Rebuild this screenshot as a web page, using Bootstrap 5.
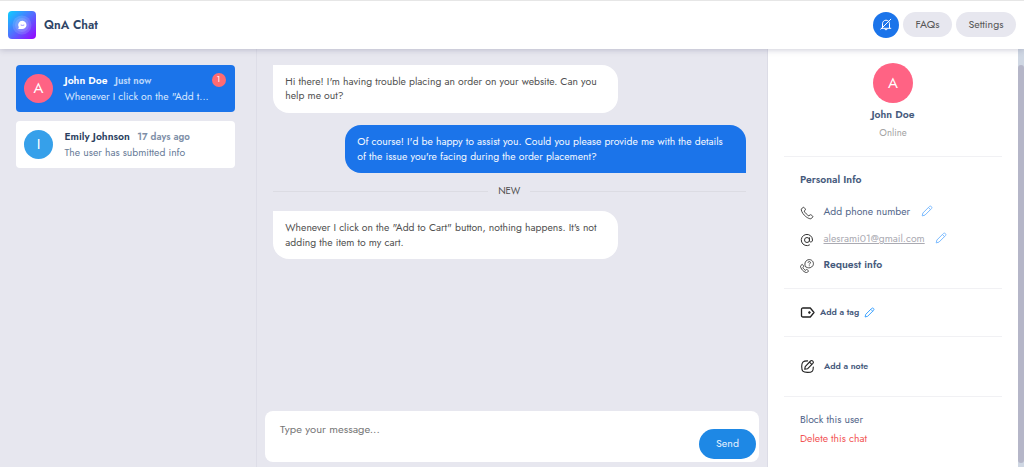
<!DOCTYPE html>
<html lang="en">
<head>
<meta charset="utf-8">
<meta name="viewport" content="width=device-width, initial-scale=1">
<title>QnA Chat</title>
<link href="https://cdn.jsdelivr.net/npm/bootstrap@5.3.0/dist/css/bootstrap.min.css" rel="stylesheet">
<style>
  body { font-family: Jost, Lato, sans-serif; font-size: 10.4px; line-height: 14.4px; background: #e7e7ef; color: #505050; }
  svg { display: block; flex: none; }
  .topbar { height: 48.5px; border-top: 1px solid #e6e6e6; box-shadow: 0 1px 6px rgba(60,60,100,.25); z-index: 2; }
  .brand { font-size: 12px; color: #2f4566; font-weight: 600; margin-left: 8px; }
  .pill { height: 25px; border-radius: 13px; background: #e7e7ef; color: #555; font-size: 10.6px; padding: 2px 0 0; }
  .bell { width: 26px; height: 26px; background: #1b74ea; }
  .inbox { width: 257px; border-right: 1px solid #dedee8; padding: 16px 21.5px 0 16px; }
  .thread { height: 47.5px; border-radius: 4px; padding: 0 8px; margin-bottom: 8.5px; background: #fff; line-height: 15.2px; color: #687b98; }
  .thread.current { background: #1b74ea; color: #d9e8ff; }
  .preview { padding: .5px 0 0 11.5px; }
  .face { width: 29px; height: 29px; font-size: 15px; color: #fff; background: #36a0ea; flex: none; padding-top: 1px; }
  .face.rose { background: #ff6384; }
  .face.large { width: 40px; height: 40px; padding-top: 0; }
  .who { color: #2b3f60; font-weight: 600; }
  .current .who { color: #fff; }
  .ago { font-weight: 600; font-size: 9.7px; margin-left: 7.5px; opacity: .85; }
  .unread { width: 14px; height: 14px; background: #ff6b72; font-size: 8.5px; color: #fff; top: 8.5px; right: 9px; }
  .talk { width: 511px; border-right: 1px solid #dcdce6; }
  .log { padding: 16px 21px 0 15.5px; }
  .msg { height: 48px; padding: 10.1px 12.8px 9px; border-radius: 0 16px 16px 16px; background: #fff; white-space: nowrap; width: 345.5px; }
  .msg.mine { background: #1b74ea; color: #f4f8ff; border-radius: 16px 16px 0 16px; width: 401.5px; margin-top: 12.5px; }
  .divide { height: 38px; font-size: 9.6px; padding-bottom: 1px; }
  .divide span { padding: 0 10px; }
  .rule { height: 1px; background: #dcdce3; }
  .composer { height: 51px; border-radius: 8px; margin: 0 8px 5px 7.5px; padding: 0 3px 3px 15.5px; color: #777; font-size: 11.2px; }
  .hint { padding-top: 11px; }
  .send { width: 57px; height: 30px; border-radius: 15px; background: #1e88e5; color: #e6f2ff; font-size: 10.6px; }
  .profile { width: 250px; padding: .5px 16px 0; color: #53668a; }
  .profile .sep { height: 1px; background: #f1f1f4; }
  .summary { height: 107px; padding-top: 14px; }
  .summary .strong { margin-top: 5px; }
  .state { margin-top: 3.5px; color: #a3a3a3; font-size: 9.6px; }
  .strong { font-weight: 600; color: #465a7c; }
  .facts { height: 131px; padding-top: 14.6px; }
  .line { height: 18px; }
  .label { margin-left: 9.5px; margin-right: 10.5px; }
  .edit { width: 12px; height: 12px; margin-bottom: 4px; color: #7cbcff; }
  .mini { font-size: 8.8px; }
  .mini .edit { width: 11px; height: 11px; margin-bottom: 0; color: #2f9bff; }
  .track { width: 6px; background: #cfd7e3; padding-top: 16px; }
  .thumb { height: 398px; border-radius: 3px; background: #b5b6c8; }
</style>
</head>
<body class="vh-100 overflow-hidden d-flex flex-column">
<svg class="d-none">
  <symbol id="pencil" viewBox="0 0 12 12"><path d="M1.2 10.9l.7-2.9L8.3 1.6c.7-.7 1.5-.6 2.1 0s.7 1.4 0 2.1L4 10.1zM7.4 2.5l2.1 2.1" fill="none" stroke="currentColor" stroke-width="1" stroke-linejoin="round"/></symbol>
</svg>
<header class="topbar bg-white d-flex align-items-center ps-2 pe-2 position-relative flex-shrink-0">
  <svg width="28" height="28" viewBox="0 0 28 28">
    <defs><linearGradient id="g" x1="0" y1="0" x2="1" y2="1"><stop offset="0" stop-color="#0cd0ff"/><stop offset=".5" stop-color="#526cff"/><stop offset="1" stop-color="#9a00ff"/></linearGradient></defs>
    <rect width="28" height="28" rx="4" fill="url(#g)"/>
    <circle cx="14" cy="14" r="9.5" fill="#fff" opacity=".13"/><circle cx="14" cy="14" r="7" fill="#fff" opacity=".13"/>
    <path d="M14.5 9.8a4.3 4.1 0 1 1-.6 8.2H10.2l.6-1.7a4.2 4.2 0 0 1 3.7-6.5z" fill="#fff"/><path d="M12.7 14q1.8.8 3.6 0" stroke="#8578ff" stroke-width=".8" fill="none"/>
  </svg>
  <span class="brand">QnA Chat</span>
  <div class="ms-auto d-flex align-items-center">
    <button class="bell btn p-0 border-0 rounded-circle d-flex align-items-center justify-content-center me-1">
      <svg width="14" height="14" viewBox="0 0 14 14" fill="none" stroke="#fff" stroke-width="1" stroke-linecap="round" stroke-linejoin="round"><path d="M2.2 10.3h9.6M3.5 10V5.8C3.5 1 10.5 1 10.5 5.8V10M5.7 11.2q1.3 1.9 2.6 0M1.8 11.2L11.8 1.2"/></svg>
    </button>
    <button class="pill btn border-0 lh-1 me-1" style="width:49px">FAQs</button>
    <button class="pill btn border-0 lh-1" style="width:60px">Settings</button>
  </div>
</header>
<main class="d-flex flex-grow-1 overflow-hidden">
  <aside class="inbox flex-shrink-0">
    <div class="thread current d-flex align-items-center position-relative">
      <div class="face rose rounded-circle d-flex align-items-center justify-content-center">A</div>
      <div class="preview text-nowrap"><div><span class="who">John Doe</span><span class="ago">Just now</span></div>Whenever I click on the "Add t...</div>
      <span class="unread position-absolute rounded-circle d-flex align-items-center justify-content-center">1</span>
    </div>
    <div class="thread d-flex align-items-center">
      <div class="face rounded-circle d-flex align-items-center justify-content-center">I</div>
      <div class="preview text-nowrap"><div><span class="who">Emily Johnson</span><span class="ago">17 days ago</span></div>The user has submitted info</div>
    </div>
  </aside>
  <section class="talk d-flex flex-column flex-shrink-0">
    <div class="log flex-grow-1 d-flex flex-column">
      <div class="msg">Hi there! I'm having trouble placing an order on your website. Can you<br>help me out?</div>
      <div class="msg mine ms-auto">Of course! I'd be happy to assist you. Could you please provide me with the details<br>of the issue you're facing during the order placement?</div>
      <div class="divide d-flex align-items-center"><div class="rule flex-grow-1"></div><span>NEW</span><div class="rule flex-grow-1"></div></div>
      <div class="msg">Whenever I click on the "Add to Cart" button, nothing happens. It's not<br>adding the item to my cart.</div>
    </div>
    <div class="composer bg-white d-flex justify-content-between align-items-end">
      <span class="hint align-self-start">Type your message...</span>
      <button class="send btn p-0 border-0">Send</button>
    </div>
  </section>
  <aside class="profile bg-white flex-shrink-0">
    <div class="summary d-flex flex-column align-items-center">
      <div class="face rose large rounded-circle d-flex align-items-center justify-content-center">A</div>
      <div class="strong">John Doe</div>
      <div class="state">Online</div>
    </div>
    <div class="sep"></div>
    <div class="facts px-3 text-nowrap">
      <div class="line d-flex align-items-center strong">Personal Info</div>
      <div class="line d-flex align-items-center" style="margin-top:14px">
        <svg width="14" height="14" viewBox="0 0 14 14" fill="none" stroke="#444" stroke-width="1" stroke-linejoin="round"><path d="M3.5 1.3L1.5 2.7C.6 3.7 2.2 7 4.4 9.3c2.4 2.4 5.8 4.2 7 3.2l1.5-1.8c.2-.6-2.2-2.2-2.7-2L8.9 9.9C7.7 9.5 4.6 6.4 4.1 5.1l1.4-1.2C5.6 3.3 4.1 1 3.5 1.3z"/></svg>
        <span class="label">Add phone number</span>
        <svg class="edit"><use href="#pencil"/></svg>
      </div>
      <div class="line d-flex align-items-center" style="margin-top:9px;color:#aaaab2">
        <svg width="14" height="14" viewBox="0 0 14 14" fill="none" stroke="#333" stroke-width="1"><circle cx="7" cy="7" r="2.5"/><path d="M9.5 4.4v3.2c0 2 3 2 3-.6A5.6 5.6 0 1 0 9.8 11.8"/></svg>
        <span class="label text-decoration-underline">alesrami01@gmail.com</span>
        <svg class="edit"><use href="#pencil"/></svg>
      </div>
      <div class="line d-flex align-items-center strong" style="margin-top:8px">
        <svg width="14" height="14" viewBox="0 0 14 14" fill="none" stroke="#333" stroke-width=".9" stroke-linejoin="round"><path d="M2.2 5.4L.8 6.6c-.8.8.3 3.1 1.8 4.7s3.9 2.9 4.7 2.1l1.2-1.4c.1-.5-1.7-1.7-2.1-1.5l-.9.8c-.8-.3-2.3-1.9-2.7-2.8l.9-.8C3.8 7.2 2.7 5.3 2.2 5.4z"/><path d="M5.5 7.8C3.8 4 6 .6 9.3.6s5.1 3.6 3.6 6-4 2.6-5.4 2zM8 3.7c0-1.5 2.6-1.5 2.5 0 0 .9-1.2.8-1.2 1.8M9.3 6.4v.8"/></svg>
        <span class="label">Request info</span>
      </div>
    </div>
    <div class="sep"></div>
    <div class="mini strong d-flex align-items-center px-3" style="height:47px">
      <svg width="15" height="11" viewBox="0 0 15 11" fill="none" stroke="#222" stroke-width="1.3" stroke-linejoin="round"><path d="M3 1h7.3L14 5.5 10.3 10H3Q1.5 10 1.5 8.5v-6Q1.5 1 3 1z"/><circle cx="9.4" cy="5.5" r=".9" fill="#222" stroke-width=".8"/></svg>
      <span style="margin:0 4.5px 0 5px">Add a tag</span>
      <svg class="edit"><use href="#pencil"/></svg>
    </div>
    <div class="sep"></div>
    <div class="mini strong d-flex align-items-center px-3" style="height:59px">
      <svg width="15" height="15" viewBox="0 0 15 15" fill="none" stroke="#222" stroke-width="1.1" stroke-linecap="round" stroke-linejoin="round"><path d="M7.6 1.9C2.8 1.9 1.7 3 1.7 7.6s1 5.8 5.8 5.8 5.8-1 5.8-5.4M4.7 10.3l.5-2.7 5.3-5.6c1.5-1.4 3.9.8 2.4 2.4L7.5 9.8zM9.5 3.1l2.3 2.3"/></svg>
      <span style="margin:-1px 0 0 9px">Add a note</span>
    </div>
    <div class="sep"></div>
    <div class="px-3" style="padding-top:14.6px">
      <div class="line d-flex align-items-center">Block this user</div>
      <div class="line d-flex align-items-center" style="color:#f25555;margin-top:.8px">Delete this chat</div>
    </div>
  </aside>
  <div class="track flex-shrink-0"><div class="thumb"></div></div>
</main>
<script src="https://cdn.jsdelivr.net/npm/bootstrap@5.3.0/dist/js/bootstrap.bundle.min.js"></script>
</body>
</html>
